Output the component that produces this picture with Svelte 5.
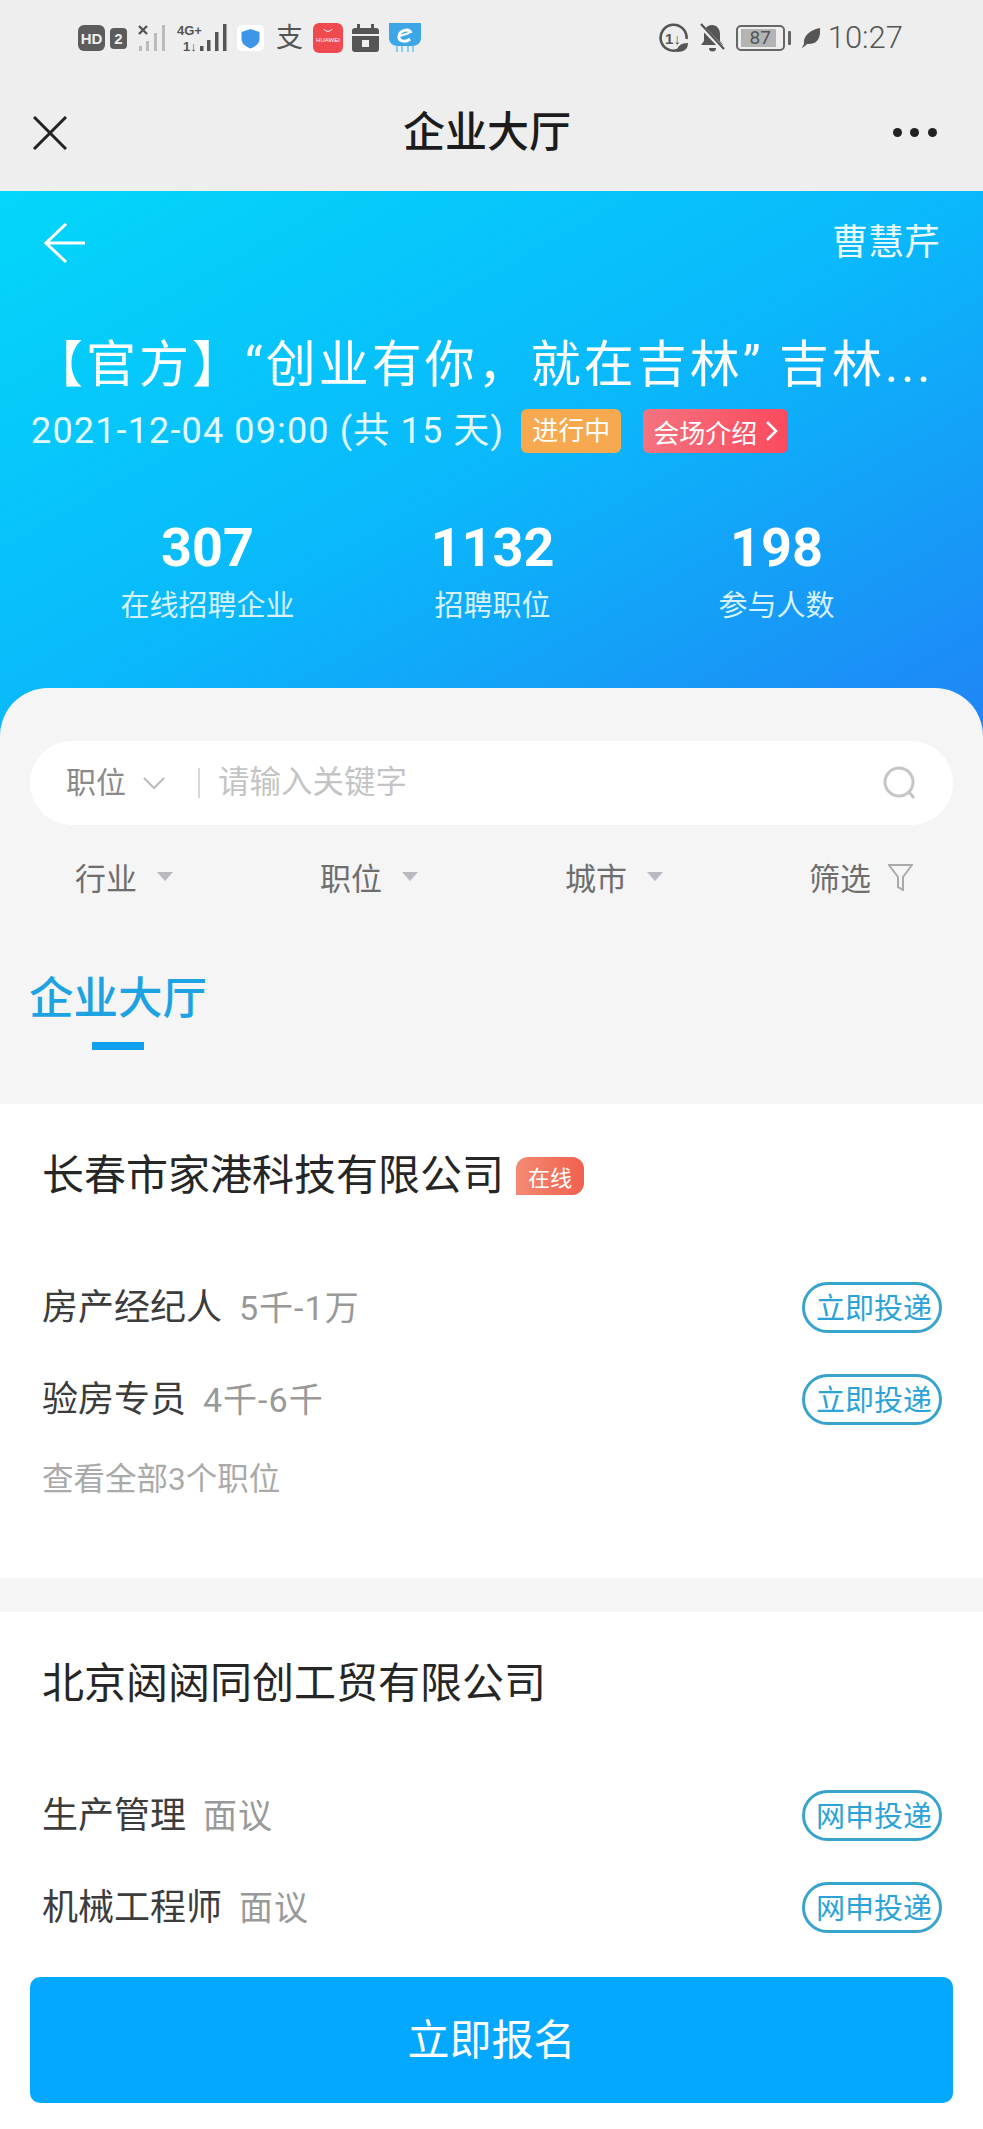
<script>
  const stats = [
    { value: '307', label: '在线招聘企业' },
    { value: '1132', label: '招聘职位' },
    { value: '198', label: '参与人数' }
  ];
  const filters = ['行业', '职位', '城市'];
  const companies = [
    {
      name: '长春市家港科技有限公司',
      online: true,
      more: '查看全部3个职位',
      action: '立即投递',
      jobs: [
        { title: '房产经纪人', pay: '5千-1万' },
        { title: '验房专员', pay: '4千-6千' }
      ]
    },
    {
      name: '北京闼闼同创工贸有限公司',
      online: false,
      action: '网申投递',
      jobs: [
        { title: '生产管理', pay: '面议' },
        { title: '机械工程师', pay: '面议' }
      ]
    }
  ];
</script>

<div class="page">
  <div class="top">
    <div class="status">
      <!-- HD + sim 2 -->
      <svg width="50" height="28" viewBox="0 0 50 28">
        <rect x="0" y="1" width="27" height="26" rx="6" fill="#5c5c5c" />
        <text x="13.5" y="20" class="tiny" font-size="15" font-weight="700" fill="#eee" text-anchor="middle">HD</text>
        <rect x="32" y="4" width="17" height="21" rx="4" fill="#5c5c5c" />
        <text x="40.5" y="20" class="tiny" font-size="15" font-weight="700" fill="#eee" text-anchor="middle">2</text>
      </svg>
      <!-- sim 1 no service -->
      <svg width="29" height="28" viewBox="0 0 29 28">
        <path d="M1 2l8 8M9 2l-8 8" stroke="#555" stroke-width="2.4" />
        <rect x="1" y="22" width="3" height="5" fill="#bbb" />
        <rect x="8" y="17" width="3" height="10" fill="#bbb" />
        <rect x="16" y="9" width="3" height="18" fill="#bbb" />
        <rect x="24" y="1" width="3" height="26" fill="#bbb" />
      </svg>
      <!-- 4G+ signal -->
      <svg width="50" height="28" viewBox="0 0 50 28">
        <text x="0" y="11" class="tiny" font-size="13" font-weight="700" fill="#555">4G+</text>
        <text x="6" y="27" class="tiny" font-size="13" font-weight="700" fill="#555">1↓</text>
        <rect x="23" y="22" width="3.5" height="5" fill="#555" />
        <rect x="30" y="16" width="3.5" height="11" fill="#555" />
        <rect x="38" y="8" width="3.5" height="19" fill="#555" />
        <rect x="46" y="0" width="3.5" height="27" fill="#555" />
      </svg>
      <!-- shield app -->
      <svg width="27" height="28" viewBox="0 0 27 28">
        <rect x="0" y="1" width="27" height="26" rx="5" fill="#fff" />
        <path d="M13.5 5l9 3v7c0 4.500-3.800 7.400-9 9.500-5.200-2.100-9-5-9-9.500V8z" fill="#3f96e8" />
      </svg>
      <span class="zhi">支</span>
      <!-- huawei store -->
      <svg width="30" height="30" viewBox="0 0 30 30">
        <rect width="30" height="30" rx="6" fill="#ee4a50" />
        <path d="M11 6c1 3 7 3 8 0" stroke="#fff" stroke-width="1" fill="none" />
        <text x="15" y="19" class="tiny" font-size="6" fill="#fff" text-anchor="middle">HUAWEI</text>
      </svg>
      <!-- calendar -->
      <svg class="cal" width="27" height="28" viewBox="0 0 27 28">
        <path d="M0 7a3 3 0 0 1 3-3h21a3 3 0 0 1 3 3v3H0zM0 12h27v13a3 3 0 0 1-3 3H3a3 3 0 0 1-3-3z" fill="#555" />
        <rect x="5" y="0" width="3" height="5" fill="#555" />
        <rect x="19" y="0" width="3" height="5" fill="#555" />
        <rect x="10" y="16" width="7" height="7" fill="#eee" />
      </svg>
      <!-- blue e app -->
      <svg width="32" height="30" viewBox="0 0 32 30">
        <path d="M0 0h32v15c0 5-4 8-9 8H9c-5 0-9-3-9-8z" fill="#3ca6e6" />
        <path d="M22 10c-2-5-11-3-12 3-1 5 6 7 11 3" stroke="#fff" stroke-width="3" fill="none" />
        <path d="M11 13l9-3" stroke="#fff" stroke-width="2" />
        <path d="M8 23v6M13 23v6M19 23v6M24 23v6" stroke="#7ccbec" stroke-width="1.800" />
      </svg>

      <div class="status-right">
        <!-- data usage with leaf -->
        <svg width="30" height="30" viewBox="0 0 30 30">
          <path d="M20 26.500A13 13 0 1 1 27.500 16" stroke="#555" stroke-width="2.600" fill="none" />
          <text x="14" y="21" class="tiny" font-size="15" font-weight="700" fill="#555" text-anchor="middle">1↓</text>
          <path d="M18 29c0-6 4-9 11-9 0 6-4 9-11 9z" fill="#555" />
        </svg>
        <!-- muted bell -->
        <svg width="25" height="30" viewBox="0 0 25 30">
          <path d="M12 2c5 0 8 4 8 9v7l3 4H1l3-4v-7c0-5 3-9 8-9z" fill="#555" />
          <path d="M9 25a3.500 3.500 0 0 0 7 0z" fill="#555" />
          <path d="M1 3l23 24" stroke="#eee" stroke-width="4.500" />
          <path d="M1 1l23 25" stroke="#555" stroke-width="2.200" />
        </svg>
        <div class="battery">
          <span class="cell">87</span>
          <i class="tip"></i>
        </div>
        <svg width="18" height="20" viewBox="0 0 18 20">
          <path d="M0 20c0-1 1-2 2-4C1 8 8 2 18 0c1 10-3 17-13 16-1 1-3 3-5 4z" fill="#555" />
        </svg>
        <span class="time">10:27</span>
      </div>
    </div>

    <div class="nav">
      <svg width="34" height="34" viewBox="0 0 34 34">
        <path d="M1 1l32 32M33 1L1 33" stroke="#222" stroke-width="3" />
      </svg>
      <div class="nav-title">企业大厅</div>
      <div class="dots"><i></i><i></i><i></i></div>
    </div>
  </div>

  <div class="hero">
    <div class="hero-top">
      <svg width="42" height="40" viewBox="0 0 42 40">
        <path d="M41 20H2M22 1L2 20l20 19" stroke="#fff" stroke-width="3" fill="none" />
      </svg>
      <span class="user">曹慧芹</span>
    </div>
    <h1>【官方】“创业有你，就在吉林” 吉林...</h1>
    <div class="date-row">
      <span class="date">2021-12-04 09:00 (共 15 天)</span>
      <span class="tag orange">进行中</span>
      <span class="tag red">会场介绍
        <svg width="13" height="22" viewBox="0 0 13 22">
          <path d="M2 2l9 9-9 9" stroke="#fff" stroke-width="2.500" fill="none" />
        </svg>
      </span>
    </div>
    <div class="stats">
      {#each stats as s}
        <div class="stat">
          <div class="num">{s.value}</div>
          <div class="cap">{s.label}</div>
        </div>
      {/each}
    </div>
  </div>

  <div class="panel">
    <div class="search">
      <span class="kind">职位</span>
      <svg width="22" height="13" viewBox="0 0 22 13">
        <path d="M1 1l10 10L21 1" stroke="#bbb" stroke-width="2" fill="none" />
      </svg>
      <i class="bar"></i>
      <span class="ph">请输入关键字</span>
      <svg class="glass" width="36" height="34" viewBox="0 0 36 34">
        <circle cx="17" cy="16" r="14" stroke="#c6c6c6" stroke-width="3" fill="none" />
        <path d="M27 26l5 6" stroke="#c6c6c6" stroke-width="3" />
      </svg>
    </div>

    <div class="filters">
      {#each filters as f}
        <div class="filter">
          <span>{f}</span>
          <i class="caret"></i>
        </div>
      {/each}
      <div class="filter last">
        <span>筛选</span>
        <svg width="25" height="27" viewBox="0 0 25 27">
          <path d="M1 1h23l-9 12v13l-5-3V13z" stroke="#aaa" stroke-width="2" fill="none" />
        </svg>
      </div>
    </div>

    <div class="tab">
      <span>企业大厅</span>
      <i></i>
    </div>
  </div>

  {#each companies as c, idx}
    <div class="card" class:gap={idx > 0}>
      <div class="co">
        <span class="co-name">{c.name}</span>
        {#if c.online}<span class="online">在线</span>{/if}
      </div>
      {#each c.jobs as j}
        <div class="job">
          <span class="job-title">{j.title}</span>
          <span class="pay">{j.pay}</span>
          <span class="apply">{c.action}</span>
        </div>
      {/each}
      {#if c.more}<div class="more">{c.more}</div>{/if}
    </div>
  {/each}

  <div class="foot">
    <button>立即报名</button>
  </div>
</div>

<style>
  :global(body) {
    margin: 0;
    background: #fff;
  }

  .page {
    width: 983px;
    height: 2129px;
    overflow: hidden;
    background: #fff;
    font-family: Roboto, "Noto Sans CJK SC", sans-serif;
  }

  .top {
    background: #eeeeee;
  }

  .status {
    display: flex;
    align-items: center;
    gap: 10px;
    height: 72px;
    padding: 2px 80px 0 78px;
  }

  .tiny {
    font-family: "Liberation Sans", sans-serif;
  }

  .zhi {
    width: 29px;
    text-align: right;
    font-size: 27px;
    line-height: 30px;
    color: #555;
  }

  .cal {
    margin-left: -1px;
  }

  .status-right {
    margin-left: auto;
    display: flex;
    align-items: center;
    gap: 11px;
  }

  .battery {
    display: flex;
    align-items: center;
    gap: 3px;
  }

  .cell {
    box-sizing: border-box;
    width: 49px;
    height: 26px;
    border: 2.500px solid #666;
    border-radius: 5px;
    background: linear-gradient(90deg, #b4b4b4 0 85%, transparent 85%);
    background-clip: content-box;
    padding: 2px 3px;
    font-size: 19px;
    line-height: 18px;
    text-align: center;
    color: #555;
  }

  .tip {
    width: 3px;
    height: 14px;
    background: #666;
    border-radius: 1px;
  }

  .time {
    font-size: 31px;
    font-weight: 300;
    line-height: 36px;
    color: #555;
    margin-left: -3px;
  }

  .nav {
    display: flex;
    align-items: center;
    justify-content: space-between;
    height: 117px;
    padding: 0 46px 0 33px;
  }

  .nav-title {
    font-size: 42px;
    font-weight: 500;
    color: #1c1c1c;
    line-height: 50px;
    margin-left: 14px;
  }

  .dots {
    display: flex;
    gap: 8.500px;
  }

  .dots i {
    width: 9px;
    height: 9px;
    border-radius: 50%;
    background: #222;
  }

  .hero {
    height: 549px;
    padding-top: 32px;
    box-sizing: border-box;
    background: linear-gradient(to bottom right, #03d7fa 0%, #0ab8fb 50%, #2084f5 100%);
    color: #fff;
  }

  .hero-top {
    display: flex;
    align-items: center;
    justify-content: space-between;
    height: 40px;
    padding: 0 43px 0 44px;
  }

  .user {
    font-size: 36px;
    line-height: 40px;
    color: #eafaff;
  }

  h1 {
    margin: 72px 0 0;
    padding-left: 33px;
    font-size: 50px;
    letter-spacing: 3px;
    font-weight: 400;
    line-height: 60px;
    white-space: nowrap;
  }

  .date-row {
    display: flex;
    align-items: center;
    margin-top: 14px;
    padding-left: 31px;
    height: 44px;
  }

  .date {
    font-size: 36px;
    letter-spacing: 1.150px;
    line-height: 44px;
    color: #e4fbff;
    white-space: nowrap;
  }

  .tag {
    display: flex;
    align-items: center;
    justify-content: center;
    height: 44px;
    border-radius: 6px;
    font-size: 26px;
    color: #fff;
  }

  .orange {
    width: 100px;
    margin-left: 17px;
    padding-bottom: 6px;
    box-sizing: border-box;
    background: #f7a94f;
  }

  .red {
    width: 145px;
    margin-left: 22px;
    gap: 8px;
    background: linear-gradient(90deg, #f5727f, #fb4a5e);
  }

  .stats {
    display: grid;
    grid-template-columns: 285px 285px 283px;
    margin-top: 63px;
    padding-left: 65px;
  }

  .stat {
    text-align: center;
  }

  .num {
    font-size: 54px;
    font-weight: 700;
    line-height: 64px;
  }

  .cap {
    margin-top: 8px;
    font-size: 29px;
    line-height: 36px;
    color: #d6f3fd;
  }

  .panel {
    height: 416px;
    margin-top: -52px;
    box-sizing: border-box;
    padding: 53px 30px 0;
    border-radius: 48px 48px 0 0;
    background: #f5f5f5;
  }

  .search {
    display: flex;
    align-items: center;
    height: 84px;
    padding: 0 35px 0 36px;
    border-radius: 42px;
    background: #fff;
  }

  .kind {
    font-size: 30px;
    color: #8a8a8a;
    line-height: 36px;
  }

  .search svg:first-of-type {
    margin-left: 17px;
  }

  .bar {
    width: 2px;
    height: 30px;
    margin: 0 18px 0 33px;
    background: #d8d8d8;
  }

  .ph {
    font-size: 31.500px;
    line-height: 36px;
    color: #c4c4c4;
  }

  .glass {
    margin-left: auto;
  }

  .filters {
    display: flex;
    align-items: center;
    height: 40px;
    margin-top: 31px;
    padding-left: 45px;
    font-size: 31px;
    color: #6e6e6e;
  }

  .filter {
    display: flex;
    align-items: center;
    width: 245px;
  }

  .filter.last {
    width: auto;
    gap: 17px;
    margin-left: -1px;
  }

  .filter.last svg {
    margin-top: 3px;
  }

  .caret {
    width: 0;
    height: 0;
    margin-left: 20px;
    border-left: 8px solid transparent;
    border-right: 8px solid transparent;
    border-top: 9px solid #b9b9c0;
  }

  .tab {
    display: inline-flex;
    flex-direction: column;
    align-items: center;
    margin-top: 75px;
    margin-left: -1px;
    color: #1ea3e2;
    font-size: 44.500px;
    line-height: 56px;
    font-weight: 500;
  }

  .tab i {
    width: 52px;
    height: 8px;
    margin-top: 15px;
    background: #109ff0;
  }

  .card {
    padding: 47px 41px 0 42px;
    height: 474px;
    box-sizing: border-box;
  }

  /* grey strip between companies */
  .card.gap {
    height: 399px;
    border-top: 34px solid #f5f5f5;
  }

  .co {
    display: flex;
    align-items: center;
    height: 50px;
    margin-bottom: 81px;
  }

  .co-name {
    font-size: 42px;
    line-height: 50px;
    font-weight: 400;
    color: #262626;
  }

  .online {
    display: flex;
    align-items: center;
    justify-content: center;
    width: 68px;
    height: 38px;
    margin-left: 12px;
    border-radius: 12px 12px 12px 0;
    background: linear-gradient(90deg, #f58a72, #f2604f);
    font-size: 22px;
    color: #fff;
  }

  .job {
    display: flex;
    align-items: center;
    height: 51px;
    margin-bottom: 41px;
  }

  .job-title {
    font-size: 36px;
    line-height: 44px;
    color: #3c3c3c;
  }

  .pay {
    margin-left: 17px;
    font-size: 34px;
    letter-spacing: 1px;
    line-height: 44px;
    color: #999;
  }

  .apply {
    margin-left: auto;
    box-sizing: border-box;
    width: 140px;
    height: 51px;
    border: 3px solid #38a3cc;
    border-radius: 26px;
    font-size: 29px;
    line-height: 49px;
    text-align: center;
    color: #2ba3d8;
    padding-left: 4px;
    white-space: nowrap;
  }

  .more {
    margin-top: -6px;
    font-size: 31.500px;
    line-height: 40px;
    color: #aaaaaa;
  }

  .foot {
    padding: 0 30px;
  }

  button {
    display: block;
    width: 100%;
    height: 126px;
    padding: 0 0 8px;
    border: 0;
    border-radius: 10px;
    background: #04a8fe;
    color: #fff;
    font-family: inherit;
    font-size: 42px;
  }
</style>
